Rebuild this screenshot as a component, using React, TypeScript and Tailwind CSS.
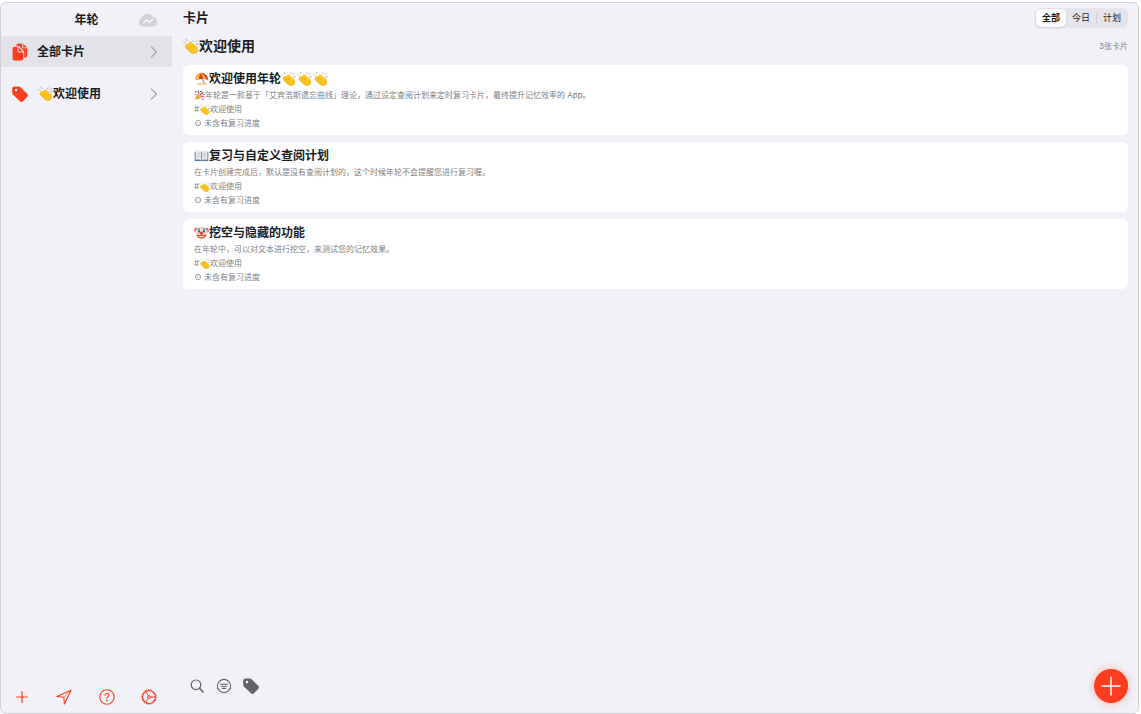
import { useState } from "react";
import type { ReactNode } from "react";
import clsx from "clsx";

type EmojiName = "clap" | "beach" | "party" | "book" | "clown";

const EMOJI_LABELS: Record<EmojiName, string> = {
  clap: "👏",
  beach: "⛱️",
  party: "🎉",
  book: "📖",
  clown: "🤡",
};

const EMOJI_ART: Record<EmojiName, ReactNode> = {
  clap: (
    <>
      <path d="M2.500 7 1 5.500M6 4.500 5 2M15 4.500l1.500-2M19 6l2.500-2M20.500 9.500l2.500-.5" stroke="#b0aca6" strokeWidth="1.400" strokeLinecap="round" />
      <path d="M3.500 10C5 7.500 7 8 8.500 8.500c.5-2 2-3.500 4-2.500l7 5.500c3 2.500 4 6 2.500 8.500-2 3.500-7.500 3.800-10.500 1.500l-8-7.500c-1.200-1.200-.8-2.800 0-4z" fill="#fcc521" />
      <path d="m6.500 12 5 5M9.500 10.500l5.500 5.500" stroke="#eda41a" strokeWidth=".9" strokeLinecap="round" />
      <path d="m4 14.500 7.500 7c3 2 8 2 10-1" stroke="#e39a10" strokeWidth="1.100" strokeLinecap="round" />
    </>
  ),
  beach: (
    <>
      <path d="M5 20.500c3-2.500 12-3 16 0 1 1-.5 2-2 2H7c-1.500 0-3-1-2-2z" fill="#f0d39a" />
      <path d="m12 11 5 9" stroke="#a1724e" strokeWidth="1.500" />
      <path d="M2.500 14C2 8 6 3.500 11 3c5.500-.5 11 4 12 11.500L15 12.500z" fill="#ea3a2a" />
      <path d="M2.500 14C2.500 9 5.500 4 11 3 8.500 6 7.500 9.500 8 13z" fill="#f7c331" />
      <path d="M11 3c5 2 7.500 6 8 10.500l-4-1z" fill="#f7c331" />
    </>
  ),
  party: (
    <>
      <path d="m7 8 9 9L1.500 22.500z" fill="#f4b63f" />
      <path d="m5.500 12 6.500 6.500M4 16l4 4" stroke="#b8741c" strokeWidth="1.500" />
      <path d="M10 9c1-3 0-5-1-7M13 12c1-5 5-3 7-7M15 15c3-2 4 1 7 0" stroke="#d7503f" strokeWidth="2.500" strokeLinecap="round" />
      <path d="M3 4h2M14 3h2M21 10h1M18 20h2" stroke="#3b82c4" strokeWidth="2.500" strokeLinecap="round" />
      <path d="M2 10h1M17 11h1" stroke="#9a66b8" strokeWidth="2.500" strokeLinecap="round" />
    </>
  ),
  book: (
    <>
      <path d="M1 6h22v15H1z" fill="#587b96" />
      <path d="M2.500 4.500C6 3.500 10 4 12 6c2-2 6-2.500 9.500-1.500V19c-4-1-7.500-.5-9.500 1-2-1.500-5.500-2-9.500-1z" fill="#e6ebee" />
      <path d="M12 6v14" stroke="#7d8c98" strokeWidth="1.500" />
      <path d="M5 8h4.500M5 11h4.500M5 14h4.500M14.500 8H19M14.500 11H19M14.500 14H19" stroke="#b4bdc5" strokeWidth="1" />
    </>
  ),
  clown: (
    <>
      <circle cx="4.500" cy="8.500" r="4" fill="#e5533d" />
      <circle cx="19.500" cy="8.500" r="4" fill="#e5533d" />
      <circle cx="12" cy="12.500" r="10" fill="#f3d9c9" />
      <path d="M8 6v5M16 6v5" stroke="#6fb0dc" strokeWidth="3.500" strokeLinecap="round" />
      <circle cx="8" cy="10" r="1.300" fill="#333" />
      <circle cx="16" cy="10" r="1.300" fill="#333" />
      <path d="M4.500 15c4 1.500 11 1.500 15 0-.5 4.500-3.500 6.500-7.500 6.500S5 19.500 4.500 15z" fill="#d8432f" />
      <path d="M7 17.200c3 1 7 1 10 0-1 2-3 2.500-5 2.500s-4-.5-5-2.500z" fill="#fff" />
      <circle cx="12" cy="13" r="2.500" fill="#e0402c" />
    </>
  ),
};

function Emoji({ name, className }: { name: EmojiName; className: string }) {
  return (
    <svg viewBox="0 0 24 24" fill="none" role="img" aria-label={EMOJI_LABELS[name]} className={clsx("shrink-0", className)}>
      {EMOJI_ART[name]}
    </svg>
  );
}

function CloudIcon() {
  return (
    <svg viewBox="0 0 20 14" fill="none" className="h-[14px] w-5">
      <path d="M5 13.500A4.300 4.300 0 0 1 3.700 5.200 6 6 0 0 1 14.800 4 4.800 4.800 0 0 1 15 13.500z" fill="#d3d2d7" />
      <path d="m5.500 9.500 2.700-2.300 3 2 3.300-2.700" stroke="#f7f6fa" strokeWidth="1.600" strokeLinecap="round" strokeLinejoin="round" />
    </svg>
  );
}

function DocsIcon() {
  return (
    <svg viewBox="0 0 16 18" className="h-[18px] w-4" fill="#fc3d1f">
      <path d="M4.500 3V2c0-1 .7-1.600 1.700-1.600h4v3.800c0 .7.400 1 1 1h4v7.500c0 1-.7 1.700-1.700 1.700h-1.300V9.200c0-.6-.2-1-.6-1.400L7.600 3.600C7.200 3.200 6.800 3 6.200 3z" />
      <path d="m11.200.7 3.700 3.700h-3.200c-.3 0-.5-.2-.5-.5z" />
      <path d="M.6 5.500c0-1 .7-1.700 1.700-1.700h3.200v4.500c0 .7.400 1.100 1.100 1.100h4.700v6.400c0 1-.7 1.700-1.700 1.700H2.300c-1 0-1.700-.7-1.700-1.700z" />
      <path d="m6.500 4.200 4.300 4.400H7.100c-.4 0-.6-.2-.6-.6z" />
    </svg>
  );
}

function TagIcon() {
  return (
    <svg viewBox="1 1 16 16" className="size-4">
      <path
        fill="currentColor"
        fillRule="evenodd"
        d="M1.200 4.200C1.200 2.500 2 1.700 3.500 1.600l4-.2c.7 0 1.300.2 1.800.7l6.900 6.600c1 .9 1 2 .1 3l-4.300 4.500c-.9 1-2 1-3 .1L2 9.700c-.5-.5-.7-1-.7-1.700zM5 3.800a1.300 1.300 0 1 0 0 2.600 1.300 1.300 0 0 0 0-2.600z"
      />
    </svg>
  );
}

function ChevronIcon() {
  return (
    <svg viewBox="0 0 8 12" fill="none" stroke="#a9a8ae" strokeWidth="1.200" strokeLinecap="round" strokeLinejoin="round" className="h-3 w-2">
      <path d="m1.500 1 5 5-5 5" />
    </svg>
  );
}

function PlusIcon({ className }: { className: string }) {
  return (
    <svg viewBox="0 0 20 20" fill="none" stroke="currentColor" strokeLinecap="round" className={className}>
      <path d="M10 1v18M1 10h18" />
    </svg>
  );
}

function SendIcon() {
  return (
    <svg viewBox="0 0 16 16" fill="none" stroke="currentColor" strokeWidth="1.100" strokeLinejoin="round" className="size-4">
      <path d="M15 1.200.8 7.500l7 .7.600 6.800z" />
      <path d="M15 1.200 7.800 8.200" strokeWidth=".6" />
    </svg>
  );
}

function HelpIcon() {
  return (
    <svg viewBox="0 0 16 16" fill="none" stroke="currentColor" strokeWidth="1.100" strokeLinecap="round" className="size-4">
      <circle cx="8" cy="8" r="7.200" />
      <path d="M6 6.200c.1-1.300.9-2 2-2s2 .7 2 1.800c0 1.500-2 1.500-2 3.200" />
      <circle cx="8" cy="11.400" r=".4" fill="currentColor" />
    </svg>
  );
}

function GearIcon() {
  return (
    <svg viewBox="0 0 16 16" fill="none" stroke="currentColor" className="size-4">
      <circle cx="8" cy="8" r="6.500" strokeWidth="1.200" />
      <circle cx="8" cy="8" r="7.300" strokeWidth=".9" strokeDasharray="1.300 1.248" />
      <circle cx="8" cy="8" r="1.400" />
      <path d="M9.400 8h5M7.300 6.800 4.900 2.500M7.300 9.200l-2.400 4.300" />
    </svg>
  );
}

function SearchIcon() {
  return (
    <svg viewBox="0 0 16 16" fill="none" stroke="currentColor" strokeWidth="1.200" strokeLinecap="round" className="size-4">
      <circle cx="7" cy="6.800" r="4.800" />
      <path d="m10.600 10.400 3.600 3.600" strokeWidth="1.500" />
    </svg>
  );
}

function FilterIcon() {
  return (
    <svg viewBox="0 0 16 16" fill="none" stroke="currentColor" strokeWidth="1.100" strokeLinecap="round" className="size-4">
      <circle cx="8" cy="8" r="6.600" />
      <path d="M4.300 6.200h7.400M5.300 8.300h5.400M6.500 10.400h3" />
    </svg>
  );
}

function StatusIcon() {
  return (
    <svg viewBox="0 0 8 8" fill="none" stroke="#8e8e93" className="size-2">
      <circle cx="4" cy="4" r="2.700" strokeWidth="1" strokeOpacity=".8" />
      <circle cx="4" cy="4" r="1" strokeWidth=".500" strokeOpacity=".6" />
    </svg>
  );
}

const NAV_ITEMS = [
  { id: "all", label: "全部卡片", emoji: false, icon: <DocsIcon /> },
  { id: "welcome", label: "欢迎使用", emoji: true, icon: <TagIcon /> },
];

const SIDEBAR_ACTIONS = [
  { label: "新建", icon: <PlusIcon className="size-3 stroke-2" /> },
  { label: "发送", icon: <SendIcon /> },
  { label: "帮助", icon: <HelpIcon /> },
  { label: "设置", icon: <GearIcon /> },
];

const TABS = ["全部", "今日", "计划"];

interface Card {
  title: string;
  icon: EmojiName;
  claps: number;
  bodyIcon?: EmojiName;
  body: string;
}

const CARDS: Card[] = [
  {
    title: "欢迎使用年轮",
    icon: "beach",
    claps: 3,
    bodyIcon: "party",
    body: "年轮是一款基于「艾宾浩斯遗忘曲线」理论，通过设定查阅计划来定时复习卡片，最终提升记忆效率的 App。",
  },
  {
    title: "复习与自定义查阅计划",
    icon: "book",
    claps: 0,
    body: "在卡片创建完成后，默认是没有查阅计划的，这个时候年轮不会提醒您进行复习喔。",
  },
  {
    title: "挖空与隐藏的功能",
    icon: "clown",
    claps: 0,
    body: "在年轮中，可以对文本进行挖空，来测试您的记忆效果。",
  },
];

function Sidebar() {
  const [active, setActive] = useState("all");

  return (
    <aside className="flex w-[171px] shrink-0 flex-col">
      <header className="grid h-[33px] grid-cols-3 items-center">
        <h1 className="col-start-2 text-center text-xs font-semibold">年轮</h1>
        <button aria-label="同步" className="mr-3.5 justify-self-end">
          <CloudIcon />
        </button>
      </header>

      <nav className="flex flex-col gap-[11px]">
        {NAV_ITEMS.map(item => (
          <button
            key={item.id}
            onClick={() => setActive(item.id)}
            className={clsx("flex h-[31px] items-center pr-3.5 pl-[11px]", active === item.id && "bg-[#e3e2e9]")}
          >
            <span className="flex w-[25px] text-[#fc3d1f]">{item.icon}</span>
            <span className="flex flex-1 items-center text-xs font-semibold">
              {item.emoji && <Emoji name="clap" className="ml-px size-[15px]" />}
              {item.label}
            </span>
            <ChevronIcon />
          </button>
        ))}
      </nav>

      <footer className="mt-auto flex justify-between pr-[15px] pb-2 pl-[13px] text-[#fc3d1f]">
        {SIDEBAR_ACTIONS.map(action => (
          <button key={action.label} aria-label={action.label} className="flex size-4 items-center justify-center">
            {action.icon}
          </button>
        ))}
      </footer>
    </aside>
  );
}

function CardItem({ card }: { card: Card }) {
  return (
    <article className="rounded-md bg-white px-[11px] pt-1 pb-[5px] text-[8px] leading-[14px] text-[#7f7f84]">
      <h3 className="flex items-center text-xs leading-[19px] font-semibold text-[#1c1c1e]">
        <Emoji name={card.icon} className="size-[15px]" />
        {card.title}
        {Array.from({ length: card.claps }, (_, i) => (
          <Emoji key={i} name="clap" className="mr-px size-[15px]" />
        ))}
      </h3>
      <p className="flex items-center">
        {card.bodyIcon && <Emoji name={card.bodyIcon} className="size-[11px]" />}
        {card.body}
      </p>
      <p className="flex items-center">
        #<Emoji name="clap" className="size-[11px]" />
        欢迎使用
      </p>
      <p className="flex items-center gap-0.5">
        <StatusIcon />
        未含有复习进度
      </p>
    </article>
  );
}

export default function App() {
  const [tab, setTab] = useState("全部");

  return (
    <div className="flex min-h-screen bg-white pt-0.5 pr-0.5 font-['Inter','Noto_Sans_CJK_SC',sans-serif] text-[#1c1c1e]">
      <div className="flex flex-1 rounded-md border border-[#d2d1d7] bg-[#f2f1f7]">
        <Sidebar />

        <main className="flex flex-1 flex-col pr-2.5 pl-[11px]">
          <header className="flex h-[30px] items-center justify-between">
            <h2 className="text-[13px] font-semibold">卡片</h2>
            <div role="group" aria-label="筛选" className="flex h-5 items-center rounded-md bg-[#e5e4ea] p-px text-[9px]">
              {TABS.map((name, i) => (
                <button
                  key={name}
                  aria-pressed={tab === name}
                  onClick={() => setTab(name)}
                  className={clsx(
                    "flex h-[18px] items-center",
                    tab === name && "rounded-[5px] bg-white font-semibold shadow-sm"
                  )}
                >
                  <span className={clsx("px-1.5 leading-[10px]", i === 2 && "border-l border-[#d0cfd5]")}>{name}</span>
                </button>
              ))}
            </div>
          </header>

          <div className="flex h-8 items-center justify-between pb-1.5">
            <h2 className="flex items-center text-sm font-semibold">
              <Emoji name="clap" className="size-4" />
              欢迎使用
            </h2>
            <span className="text-[8px] text-[#7f7f84]">3张卡片</span>
          </div>

          <section className="flex flex-col gap-[7px]">
            {CARDS.map(card => (
              <CardItem key={card.title} card={card} />
            ))}
          </section>

          <footer className="mt-auto flex items-center justify-between pb-2.5">
            <div className="flex gap-[11px] pl-1.5 text-[#636267]">
              <button aria-label="搜索">
                <SearchIcon />
              </button>
              <button aria-label="排序">
                <FilterIcon />
              </button>
              <button aria-label="标签">
                <TagIcon />
              </button>
            </div>
            <button
              aria-label="新建卡片"
              className="flex size-[34px] items-center justify-center rounded-full bg-[#fc3d1f] text-white shadow-[0_0_8px_rgba(252,61,31,0.35)]"
            >
              <PlusIcon className="size-5 stroke-[1.5]" />
            </button>
          </footer>
        </main>
      </div>
    </div>
  );
}
